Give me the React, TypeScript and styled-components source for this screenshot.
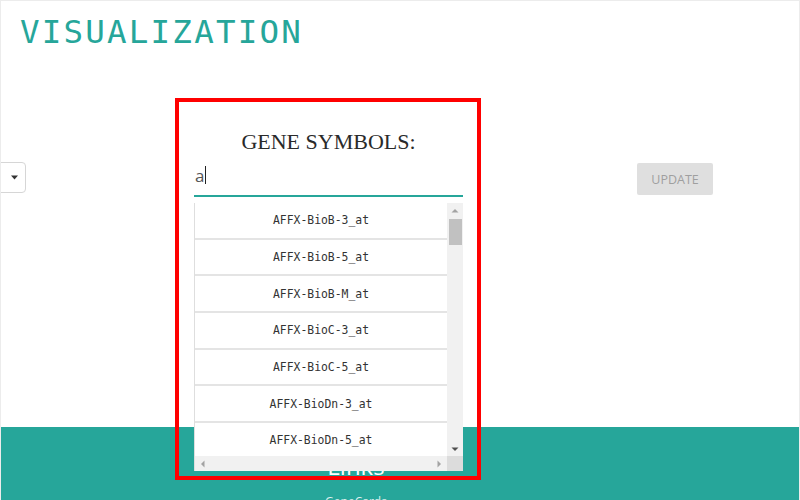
import React from "react";
import styled, { createGlobalStyle } from "styled-components";

const TEAL = "#26a69a";

const GlobalStyle = createGlobalStyle`
  html, body { margin: 0; padding: 0; background: #fff; overflow: hidden; }
  #root { width: 800px; height: 500px; }
`;

const Page = styled.div`
  position: relative;
  width: 800px;
  height: 500px;
  box-sizing: border-box;
  border: 1px solid #ececec;
  border-bottom: none;
  display: flex;
  flex-direction: column;
  overflow: hidden;
  font-family: "Open Sans", Roboto, sans-serif;
`;

const Header = styled.header`
  height: 69px;
  box-sizing: border-box;
  padding: 13px 0 0 19px;
`;

const Title = styled.h1`
  margin: 0;
  font-family: "DejaVu Sans Mono", monospace;
  font-weight: 400;
  font-size: 32.5px;
  line-height: 37px;
  letter-spacing: 2.2px;
  color: ${TEAL};
`;

const Main = styled.main`
  flex: 1;
  position: relative;
  z-index: 2;
`;

const Controls = styled.div`
  display: grid;
  grid-template-columns: 26px 167px 269px 174px 76px;
  align-items: end;
  padding-top: 59px;
`;

const SelectBox = styled.div`
  width: 60px;
  height: 31px;
  margin-left: -35px;
  margin-bottom: 3px;
  box-sizing: border-box;
  border: 1px solid #d6d6d6;
  border-radius: 4px;
  background: #fff;
  display: flex;
  align-items: center;
  justify-content: flex-end;
  padding-right: 7px;
`;

const Field = styled.div`
  position: relative;
  display: flex;
  flex-direction: column;
`;

const Label = styled.label`
  font-family: "Liberation Serif", "Times New Roman", serif;
  font-size: 22px;
  line-height: 26px;
  color: #2a2a2a;
  text-align: center;
`;

const InputBox = styled.div`
  height: 40px;
  box-sizing: content-box;
  border-bottom: 1px solid ${TEAL};
  box-shadow: 0 1px 0 0 ${TEAL};
  display: flex;
  align-items: center;
  padding-left: 1px;
  font-family: "Open Sans", sans-serif;
  font-size: 17px;
  color: #555;
`;

const Caret = styled.span`
  display: inline-block;
  width: 1px;
  height: 18px;
  background: #222;
  margin-left: 1px;
`;

const Dropdown = styled.div`
  position: absolute;
  top: calc(100% + 7px);
  left: 0;
  width: 269px;
  height: 268px;
  box-sizing: border-box;
  border-left: 1px solid #dedede;
  background: #fff;
  display: grid;
  grid-template-columns: 1fr 16px;
  grid-template-rows: 1fr 15px;
  z-index: 5;
`;

const ItemList = styled.ul`
  margin: 0;
  padding: 0;
  list-style: none;
  overflow: hidden;
`;

const Item = styled.li`
  height: 34.67px;
  border-bottom: 2px solid #e4e4e4;
  display: flex;
  align-items: center;
  justify-content: center;
  font-family: "DejaVu Sans Mono", monospace;
  font-size: 11.4px;
  color: #333;
`;

const VTrack = styled.div`
  background: #f1f1f1;
  display: flex;
  flex-direction: column;
  align-items: center;
`;

const ArrowCell = styled.div`
  width: 16px;
  height: 15px;
  display: flex;
  align-items: center;
  justify-content: center;
  flex: none;
`;

const Thumb = styled.div`
  width: 13px;
  height: 26px;
  margin-top: 1px;
  background: #c1c1c1;
`;

const Spacer = styled.div`
  flex: 1;
`;

const HTrack = styled.div`
  background: #f1f1f1;
  display: flex;
  align-items: center;
`;

const Corner = styled.div`
  background: #dcdcdc;
`;

const UpdateButton = styled.button`
  width: 76px;
  height: 32px;
  margin-bottom: 1px;
  border: none;
  border-radius: 2px;
  background: #dfdfdf;
  color: #9f9f9f;
  font-family: "Open Sans", sans-serif;
  font-size: 12.5px;
  text-transform: uppercase;
  padding: 0;
  cursor: default;
`;

const Footer = styled.footer`
  height: 73px;
  flex: none;
  background: ${TEAL};
  box-sizing: border-box;
  padding-top: 24px;
`;

const FooterColumn = styled.div`
  width: 120px;
  margin-left: 295px;
  text-align: center;
  color: #fff;
`;

const FooterHeading = styled.h5`
  margin: 0;
  font-family: "Open Sans", sans-serif;
  font-weight: 400;
  font-size: 24px;
  line-height: 30px;
`;

const FooterLink = styled.a`
  display: block;
  margin-top: 12px;
  font-family: "Open Sans", sans-serif;
  font-size: 12px;
  color: rgba(255, 255, 255, 0.85);
  text-decoration: none;
`;

const Annotation = styled.div`
  position: absolute;
  left: 174px;
  top: 97px;
  width: 306px;
  height: 382px;
  box-sizing: border-box;
  border: 4px solid #ff0000;
  pointer-events: none;
  z-index: 10;
`;

type Dir = "up" | "down" | "left" | "right";

const Tri: React.FC<{ dir: Dir; color: string }> = ({ dir, color }) => {
  const paths: Record<Dir, string> = {
    up: "M0.5 4.5 L4 1 L7.5 4.5 Z",
    down: "M0.5 1.5 L7.5 1.5 L4 5 Z",
    left: "M4.5 0.5 L4.5 7.5 L1 4 Z",
    right: "M1.5 0.5 L1.5 7.5 L5 4 Z",
  };
  const vertical = dir === "up" || dir === "down";
  return (
    <svg width={vertical ? 8 : 6} height={vertical ? 6 : 8} viewBox={vertical ? "0 0 8 6" : "0 0 6 8"}>
      <path d={paths[dir]} fill={color} />
    </svg>
  );
};

const genes = [
  "AFFX-BioB-3_at",
  "AFFX-BioB-5_at",
  "AFFX-BioB-M_at",
  "AFFX-BioC-3_at",
  "AFFX-BioC-5_at",
  "AFFX-BioDn-3_at",
  "AFFX-BioDn-5_at",
  "AFFX-CreX-3_at",
];

export default function App() {
  return (
    <>
      <GlobalStyle />
      <Page>
        <Header>
          <Title>VISUALIZATION</Title>
        </Header>
        <Main>
          <Controls>
            <SelectBox>
              <svg width="7" height="5" viewBox="0 0 7 5">
                <path d="M0 0.5 L7 0.5 L3.5 4.5 Z" fill="#333" />
              </svg>
            </SelectBox>
            <div />
            <Field>
              <Label>GENE SYMBOLS:</Label>
              <InputBox>
                a<Caret />
              </InputBox>
              <Dropdown>
                <ItemList>
                  {genes.map((g) => (
                    <Item key={g}>{g}</Item>
                  ))}
                </ItemList>
                <VTrack>
                  <ArrowCell>
                    <Tri dir="up" color="#a3a3a3" />
                  </ArrowCell>
                  <Thumb />
                  <Spacer />
                  <ArrowCell>
                    <Tri dir="down" color="#505050" />
                  </ArrowCell>
                </VTrack>
                <HTrack>
                  <ArrowCell>
                    <Tri dir="left" color="#a3a3a3" />
                  </ArrowCell>
                  <Spacer />
                  <ArrowCell>
                    <Tri dir="right" color="#a3a3a3" />
                  </ArrowCell>
                </HTrack>
                <Corner />
              </Dropdown>
            </Field>
            <div />
            <UpdateButton disabled>Update</UpdateButton>
          </Controls>
        </Main>
        <Footer>
          <FooterColumn>
            <FooterHeading>Links</FooterHeading>
            <FooterLink href="#">GeneCards</FooterLink>
          </FooterColumn>
        </Footer>
        <Annotation />
      </Page>
    </>
  );
}
